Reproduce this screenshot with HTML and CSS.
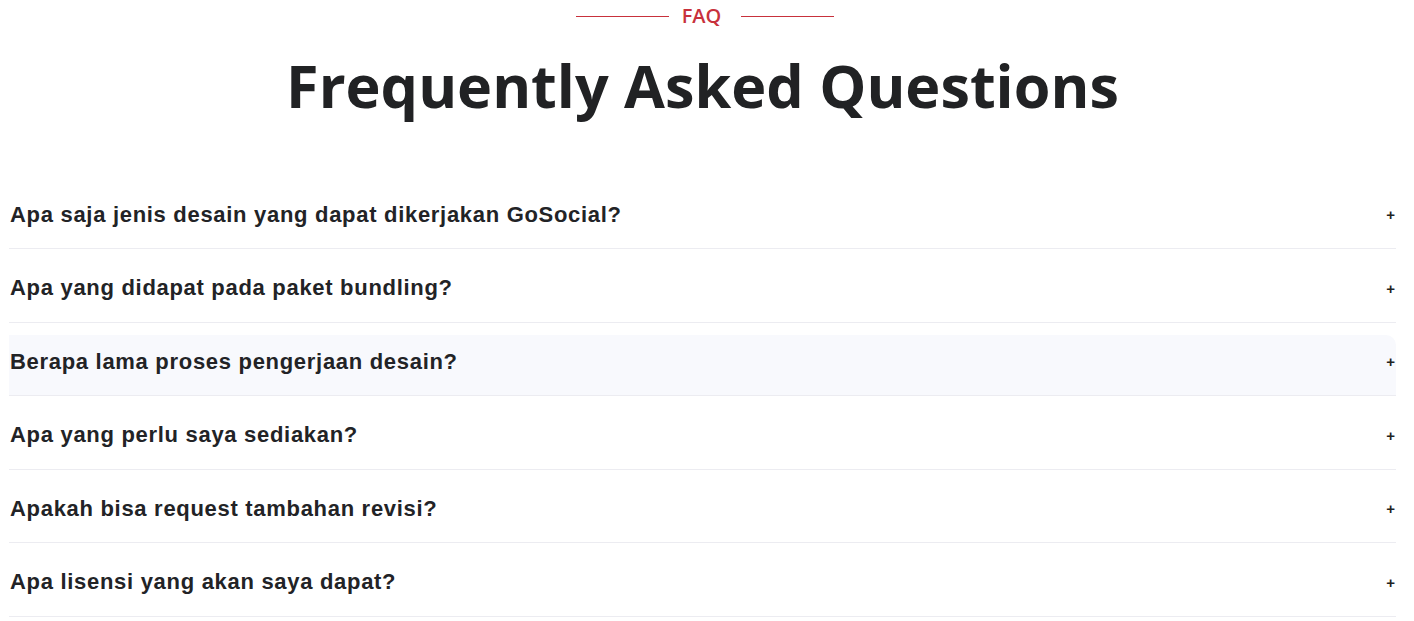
FILE: index.html
```html
<!DOCTYPE html>
<html lang="id">
<head>
<meta charset="utf-8">
<title>FAQ</title>
<link rel="stylesheet" href="styles.css">
</head>
<body>
<section class="faq">
  <div class="eyebrow"><span class="line"></span><span class="label">FAQ</span><span class="line"></span></div>
  <h1 class="title">Frequently Asked Questions</h1>
  <div class="list">
    <div class="item"><div class="head"><span class="q">Apa saja jenis desain yang dapat dikerjakan GoSocial?</span><span class="plus">+</span></div></div>
    <div class="item"><div class="head"><span class="q">Apa yang didapat pada paket bundling?</span><span class="plus">+</span></div></div>
    <div class="item"><div class="head hover"><span class="q">Berapa lama proses pengerjaan desain?</span><span class="plus">+</span></div></div>
    <div class="item"><div class="head"><span class="q">Apa yang perlu saya sediakan?</span><span class="plus">+</span></div></div>
    <div class="item"><div class="head"><span class="q">Apakah bisa request tambahan revisi?</span><span class="plus">+</span></div></div>
    <div class="item"><div class="head"><span class="q">Apa lisensi yang akan saya dapat?</span><span class="plus">+</span></div></div>
  </div>
</section>
</body>
</html>
```
FILE: styles.css
```css
html, body { margin: 0; padding: 0; background: #fff; }
body { overflow: hidden; }
.faq { padding: 0 18px 0 9px; }
.eyebrow {
  display: flex; justify-content: center; align-items: center;
  gap: 13px; height: 32px; padding-left: 5px;
}
.line { width: 93px; height: 1px; background: #c8313c; }
.label {
  font-family: "Open Sans", sans-serif; font-weight: 600; font-size: 20px;
  color: #c8313c; line-height: 1; padding-right: 7px;
}
.title {
  margin: 12px 0 0; text-align: center;
  font-family: "Open Sans", sans-serif; font-weight: 700; font-size: 59.3px;
  line-height: 82px; color: #212224; letter-spacing: 0;
}
.list { margin-top: 62px; }
.item { border-bottom: 1px solid #ececf1; padding-top: 12.5px; }
.item:first-child { padding-top: 0; }
.head {
  box-sizing: border-box;
  display: flex; justify-content: space-between; align-items: center;
  height: 60px; padding: 0 0 7px 1px; border-radius: 0 10px 0 0;
}
.head.hover { background: #f8f9fd; }
.q {
  font-family: "Liberation Sans", Arial, sans-serif; font-weight: 700;
  font-size: 22px; color: #222326; letter-spacing: 0.7px;
}
.plus {
  font-family: "Liberation Sans", Arial, sans-serif; font-weight: 700;
  font-size: 15px; color: #222; padding-right: 1px;
}
```
